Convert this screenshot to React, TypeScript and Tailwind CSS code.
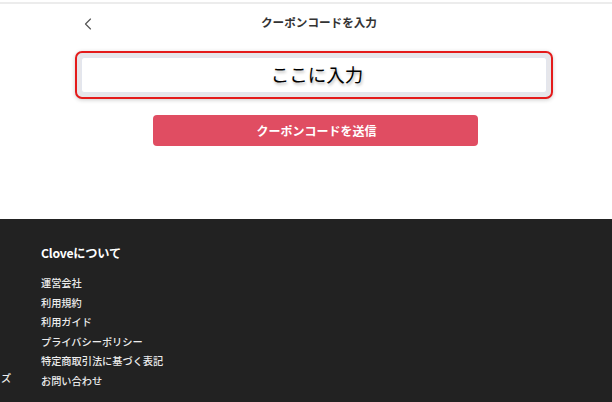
import React from "react";
import { ChevronLeft } from "lucide-react";

export default function App() {
  const links = ["運営会社", "利用規約", "利用ガイド", "プライバシーポリシー", "特定商取引法に基づく表記", "お問い合わせ"];
  return (
    <div className="w-[612px] h-[402px] overflow-hidden bg-white flex flex-col [font-family:'Noto_Sans_CJK_JP','Noto_Sans',sans-serif]">
      <div className="h-[2px] mt-[2px] bg-[#ececec]" />
      <div className="h-[215px] flex flex-col">
        <div className="ml-[75px] w-[478px] flex items-center h-[38px] relative">
          <ChevronLeft className="ml-[3px] w-[20px] h-[20px] text-[#555] mt-[2px]" strokeWidth={1.4} />
          <div className="absolute left-0 right-0 text-center text-[11.6px] font-bold text-[#333] pl-[10px]">クーポンコードを入力</div>
        </div>
        <div className="ml-[75px] mt-[9px] w-[478px] h-[48px] rounded-[7px] border-2 border-[#e41b1b] bg-[#e6e6ea] p-[4px] shadow-[0_1px_4px_rgba(0,0,0,0.2)]">
          <div className="h-full bg-white border border-[#e3e6ee] rounded-[3px] flex items-center justify-center text-[18.5px] text-black pl-[6px] [text-shadow:1px_2px_3px_rgba(0,0,0,0.3)]">
            ここに入力
          </div>
        </div>
        <div className="ml-[153px] mt-[16px] w-[325px] h-[31px] rounded-[4px] bg-[#e04d62] flex items-center justify-center text-white text-[12px] font-bold pl-[2px]">
          クーポンコードを送信
        </div>
      </div>
      <div className="flex-1 bg-[#222222] flex">
        <div className="w-[41px] flex flex-col justify-end pb-[14px] text-[10.2px] font-medium text-[#ececec]">
          <div className="leading-[20px] pl-[1px]">ズ</div>
        </div>
        <div className="flex flex-col pt-[24px]">
          <div className="text-[12.2px] font-bold text-white leading-[20px] tracking-[-0.2px]">Cloveについて</div>
          <div className="mt-[10px] flex flex-col">
            {links.map((l) => (
              <div key={l} className="text-[10.2px] font-medium text-[#ececec] leading-[19.6px]">{l}</div>
            ))}
          </div>
        </div>
      </div>
    </div>
  );
}
